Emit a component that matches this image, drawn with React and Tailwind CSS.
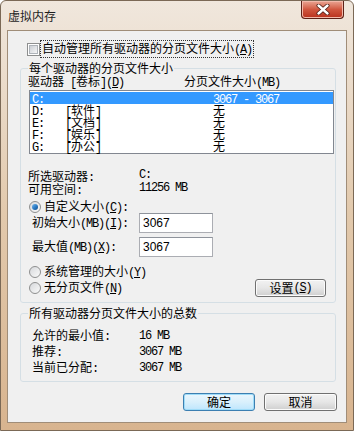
import React from 'react';

const drives = [
  { d: 'C:', label: '', size: '3067 - 3067', sel: true },
  { d: 'D:', label: '[软件]', size: '无' },
  { d: 'E:', label: '[文档]', size: '无' },
  { d: 'F:', label: '[娱乐]', size: '无' },
  { d: 'G:', label: '[办公]', size: '无' },
];

// half-width runs render 6px wide like the dialog's bitmap font
const MONO = "font-['Liberation_Mono',monospace] text-[12px] tracking-[-1.2px]";

function Tx({ s }) {
  const parts = s.split(/([\x20-\x7e]+)/).filter(Boolean);
  return parts.map((p, i) =>
    /^[\x20-\x7e]+$/.test(p) ? (
      <span key={i} className={`${MONO} whitespace-pre`}>{p}</span>
    ) : (
      <span key={i}>{p}</span>
    )
  );
}

function Key({ k }) {
  return <span className={`${MONO} underline underline-offset-1`}>{k}</span>;
}

function Radio({ checked }) {
  return (
    <span className="w-[12px] h-[12px] rounded-full border border-[#8e8f8f] bg-gradient-to-br from-[#d6d8db] to-[#fafafa] flex items-center justify-center shrink-0">
      {checked && (
        <span className="w-[6px] h-[6px] rounded-full bg-gradient-to-br from-[#74b8ea] via-[#2f7fc8] to-[#0f4c8a]" />
      )}
    </span>
  );
}

function Btn({ children, def, w }) {
  return (
    <button
      className={`${w} h-[18px] rounded-[3px] border flex items-center justify-center leading-[12px] ${
        def
          ? 'border-[#3c7fb1] bg-gradient-to-b from-[#eaf6fd] via-[#d9f0fc] to-[#bee6fd] shadow-[inset_0_0_0_1px_#9fdcf8]'
          : 'border-[#707070] bg-gradient-to-b from-[#f2f2f2] via-[#e6e6e6] to-[#cfcfcf] shadow-[inset_0_0_0_1px_#fbfbfb]'
      }`}
    >
      {children}
    </button>
  );
}

function Input({ value }) {
  return (
    <div className="w-[74px] h-[20px] bg-white border border-[#abadb3] border-t-[#8e939b] px-[3px] pt-[3px] leading-[12px] font-['Liberation_Sans',sans-serif] text-[12px]">
      {value}
    </div>
  );
}

export default function App() {
  return (
    <div className="w-[354px] h-[431px] flex flex-col border border-[#7b6956] rounded-t-[6px] overflow-hidden bg-gradient-to-b from-[#f0e7dd] via-[#e2c9ac] to-[#d8b48f] font-['Noto_Sans_CJK_SC','Liberation_Sans',sans-serif] text-[12px] text-black">
      <div className="h-[29px] flex items-start justify-between shrink-0">
        <span className="ml-[7px] mt-[8px] leading-[14px] text-[12px] text-[#1e1e1e]">虚拟内存</span>
        <button className="mr-[9px] w-[43px] h-[18px] rounded-b-[4px] border border-t-0 border-[#5c2117] bg-gradient-to-b from-[#e9a594] via-[#d0563f] to-[#b8301c] shadow-[inset_0_0_0_1px_#f2b9aa] flex items-center justify-center">
          <svg width="14" height="11" viewBox="0 0 14 11">
            <path d="M2.5 1.5 L11.5 9.5 M11.5 1.5 L2.5 9.5" stroke="#4a1a12" strokeWidth="4" strokeLinecap="round" />
            <path d="M2.5 1.5 L11.5 9.5 M11.5 1.5 L2.5 9.5" stroke="#ffffff" strokeWidth="2.4" strokeLinecap="round" />
          </svg>
        </button>
      </div>

      <div className="mx-[6px] h-[393px] shrink-0 border border-[#a08d78] bg-[#f0f0f0] flex flex-col">
        <div className="mt-[11px] ml-[19px] h-[14px] flex items-center">
          <span className="w-[13px] h-[13px] border border-[#8e8f8f] bg-white p-[1px] shrink-0">
            <span className="block w-full h-full border border-[#aeb3b9] bg-gradient-to-br from-[#cbcfd5] to-[#f6f6f6]" />
          </span>
          <span className="ml-[1px] px-[1px] leading-[13px] outline-1 outline-dotted outline-[#333]">
            <Tx s="自动管理所有驱动器的分页文件大小(" />
            <Key k="A" />
            <Tx s=")" />
          </span>
        </div>

        <fieldset className="mt-[5px] ml-[12px] w-[316px] border border-[#d5dfe5] rounded-[3px] pl-[7px] pb-[5px]">
          <legend className="px-[1px] leading-[14px]">每个驱动器的分页文件大小</legend>
          <div className="h-[12px] flex leading-[12px]">
            <span className="w-[156px]">
              <Tx s="驱动器 [卷标](" />
              <Key k="D" />
              <Tx s=")" />
            </span>
            <span>
              <Tx s="分页文件大小(MB)" />
            </span>
          </div>
          <div className="mt-[3px] ml-[1px] w-[305px] h-[64px] border border-[#828790] bg-white py-[1px]">
            {drives.map((r) => (
              <div
                key={r.d}
                className={`h-[12px] flex leading-[12px] pl-[2px] ${r.sel ? 'bg-[#3399ff] text-white' : ''}`}
              >
                <span className="w-[33px]">
                  <Tx s={r.d} />
                </span>
                <span className="w-[148px]">
                  <Tx s={r.label} />
                </span>
                <span>
                  <Tx s={r.size} />
                </span>
              </div>
            ))}
          </div>

          <div className="mt-[15px] h-[13px] flex leading-[13px]">
            <span className="w-[111px]">
              <Tx s="所选驱动器:" />
            </span>
            <Tx s="C:" />
          </div>
          <div className="h-[13px] flex leading-[13px]">
            <span className="w-[111px]">
              <Tx s="可用空间:" />
            </span>
            <Tx s="11256 MB" />
          </div>

          <div className="mt-[6px] ml-[1px] h-[12px] flex items-center leading-[12px]">
            <Radio checked />
            <span className="ml-[3px]">
              <Tx s="自定义大小(" />
              <Key k="C" />
              <Tx s="):" />
            </span>
          </div>
          <div className="h-[20px] flex items-center">
            <span className="ml-[4px] w-[107px] leading-[12px]">
              <Tx s="初始大小(MB)(" />
              <Key k="I" />
              <Tx s="):" />
            </span>
            <Input value="3067" />
          </div>
          <div className="mt-[4px] h-[20px] flex items-center">
            <span className="ml-[4px] w-[107px] leading-[12px]">
              <Tx s="最大值(MB)(" />
              <Key k="X" />
              <Tx s="):" />
            </span>
            <Input value="3067" />
          </div>

          <div className="mt-[9px] ml-[1px] h-[12px] flex items-center leading-[12px]">
            <Radio />
            <span className="ml-[3px]">
              <Tx s="系统管理的大小(" />
              <Key k="Y" />
              <Tx s=")" />
            </span>
          </div>
          <div className="mt-[1px] ml-[1px] h-[18px] flex items-center leading-[12px]">
            <Radio />
            <span className="ml-[3px] w-[211px]">
              <Tx s="无分页文件(" />
              <Key k="N" />
              <Tx s=")" />
            </span>
            <Btn w="w-[71px]">
              <Tx s="设置(" />
              <Key k="S" />
              <Tx s=")" />
            </Btn>
          </div>
        </fieldset>

        <fieldset className="mt-[3px] ml-[12px] w-[316px] border border-[#d5dfe5] rounded-[3px] pl-[7px] pt-[8px] pb-[5px]">
          <legend className="px-[1px] leading-[14px]">所有驱动器分页文件大小的总数</legend>
          {[
            ['允许的最小值:', '16 MB'],
            ['推荐:', '3067 MB'],
            ['当前已分配:', '3067 MB'],
          ].map(([k, v]) => (
            <div key={k} className="h-[16px] flex items-center leading-[12px]">
              <span className="ml-[4px] w-[107px]">
                <Tx s={k} />
              </span>
              <Tx s={v} />
            </div>
          ))}
        </fieldset>

        <div className="mt-[11px] mr-[9px] flex justify-end gap-[9px]">
          <Btn def w="w-[72px]">确定</Btn>
          <Btn w="w-[73px]">取消</Btn>
        </div>
      </div>
    </div>
  );
}
